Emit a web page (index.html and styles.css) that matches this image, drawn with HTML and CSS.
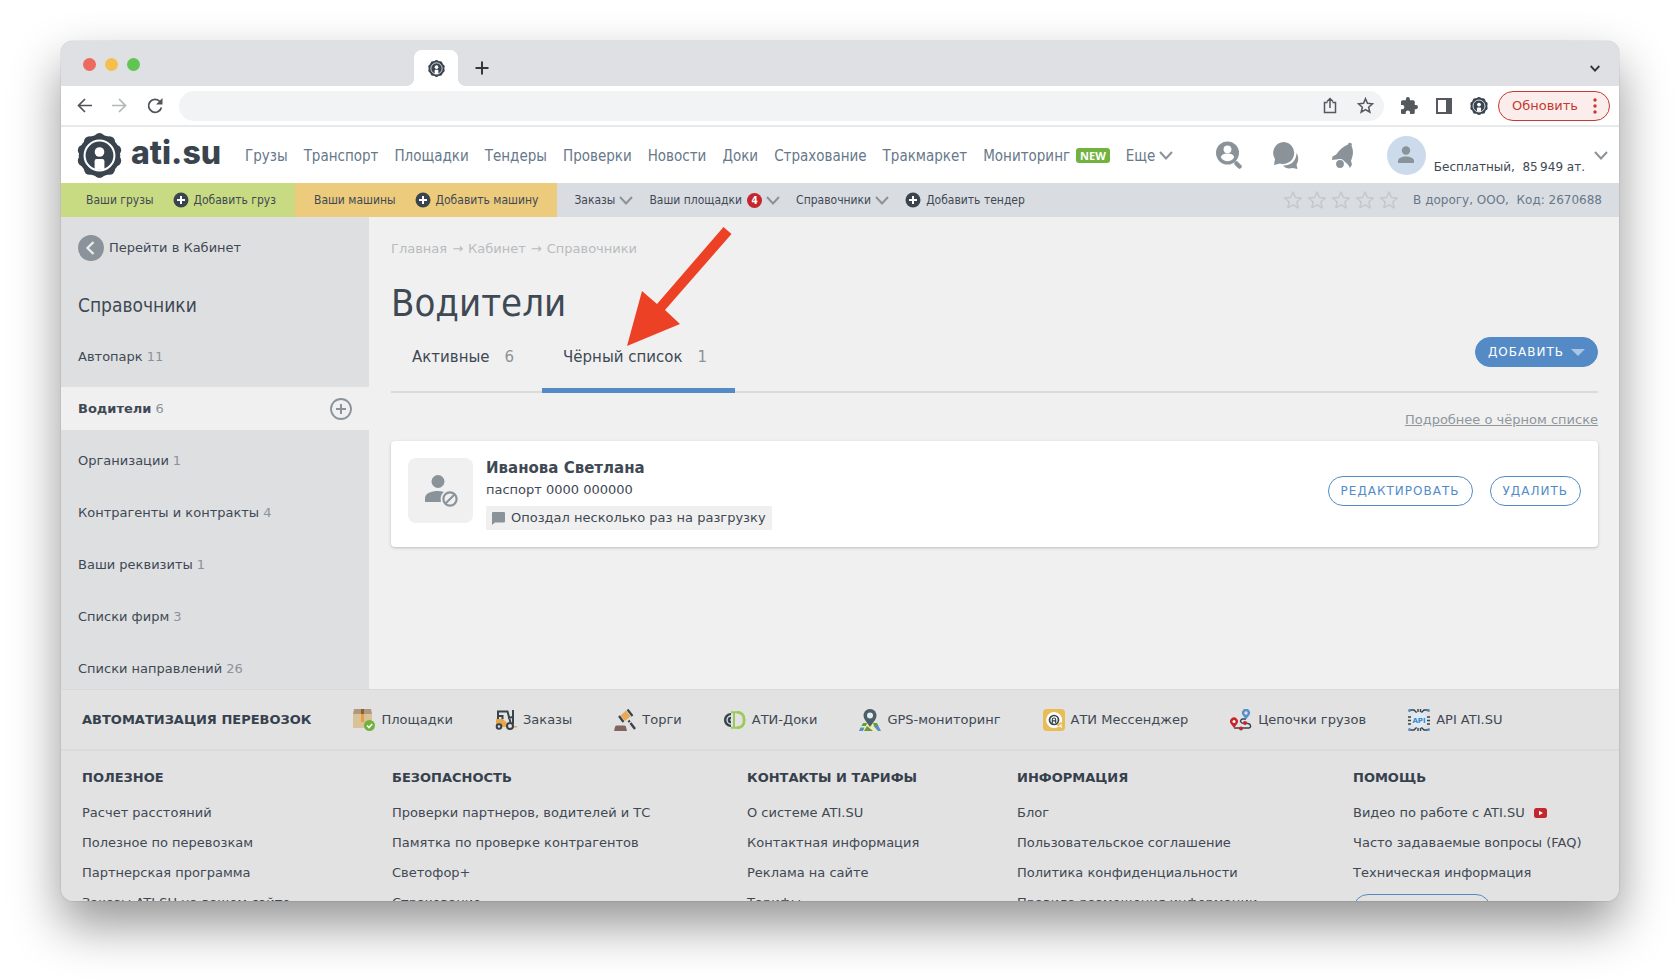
FILE: index.html
```html
<!DOCTYPE html>
<html lang="ru">
<head>
<meta charset="utf-8">
<title>Водители — ATI.SU</title>
<link rel="stylesheet" href="styles.css">
</head>
<body>
<svg class="sprite" aria-hidden="true">
  <symbol id="gear" viewBox="0 0 44 44">
    <g fill="#3a444f"><circle cx="22" cy="22" r="20.300"/>
    <circle cx="22" cy="5.500" r="5.500"/><circle cx="31.700" cy="8.650" r="5.500"/><circle cx="37.700" cy="16.900" r="5.500"/><circle cx="37.700" cy="27.100" r="5.500"/><circle cx="31.700" cy="35.350" r="5.500"/><circle cx="22" cy="38.500" r="5.500"/><circle cx="12.300" cy="35.350" r="5.500"/><circle cx="6.300" cy="27.100" r="5.500"/><circle cx="6.300" cy="16.900" r="5.500"/><circle cx="12.300" cy="8.650" r="5.500"/></g>
    <circle cx="22" cy="22" r="14.600" fill="none" stroke="#fff" stroke-width="2"/>
    <circle cx="22" cy="18.600" r="4.700" fill="#fff"/>
    <path d="M17.200 36V27.500q0-2 2-2h5.600q2 0 2 2V36z" fill="#fff"/>
  </symbol>
  <symbol id="chev" viewBox="0 0 14 9"><path d="M1 1l6 6.500L13 1" fill="none" stroke="currentColor" stroke-width="2"/></symbol>
  <symbol id="plus" viewBox="0 0 16 16"><circle cx="8" cy="8" r="7.500" fill="#3a444f"/><path d="M8 4v8M4 8h8" stroke="#fff" stroke-width="2"/></symbol>
  <symbol id="star" viewBox="0 0 20 20"><path d="M10 2l2.400 5.500 6 .5-4.600 4 1.400 5.900L10 14.800l-5.200 3.100L6.200 12 1.600 8l6-.5z" fill="none" stroke="currentColor" stroke-width="1.500" stroke-linejoin="round"/></symbol>
</svg>
<div class="window">
  <div class="tabstrip">
    <div class="lights"><i class="red"></i><i class="amber"></i><i class="green"></i></div>
    <div class="tab"><svg width="17" height="17"><use href="#gear"/></svg></div>
    <button class="plain newtab" aria-label="Новая вкладка"><svg width="14" height="14" viewBox="0 0 14 14"><path d="M7 .5v13M.5 7h13" stroke="#33363a" stroke-width="2"/></svg></button>
    <button class="plain tabmenu" aria-label="Список вкладок"><svg width="10" height="7" viewBox="0 0 14 9"><path d="M1 1l6 6.500L13 1" fill="none" stroke="#33363a" stroke-width="2.600"/></svg></button>
  </div>
  <div class="toolbar">
    <button class="plain" aria-label="Назад"><svg width="15" height="15" viewBox="0 0 15 15"><path d="M15 7.500H2M8 1L1.500 7.500 8 14" fill="none" stroke="#505357" stroke-width="1.700"/></svg></button>
    <button class="plain" aria-label="Вперёд"><svg width="15" height="15" viewBox="0 0 15 15"><path d="M0 7.500h13M7 1l6.500 6.500L7 14" fill="none" stroke="#b3b6b9" stroke-width="1.700"/></svg></button>
    <button class="plain" aria-label="Обновить страницу"><svg width="16" height="16" viewBox="0 0 16 16"><path d="M13 3.500A6.500 6.500 0 1 0 14.400 9.500" fill="none" stroke="#505357" stroke-width="1.800"/><path d="M15.500 0v6.500H9z" fill="#505357"/></svg></button>
    <div class="omnibox">
      <input type="text" aria-label="Адрес">
      <svg width="14" height="17" viewBox="0 0 14 17"><path d="M4.500 5.500H1.500v10h11v-10h-3M7 11V1.500M4 4.500l3-3 3 3" fill="none" stroke="#55585c" stroke-width="1.500"/></svg>
      <svg width="17" height="17" viewBox="0 0 20 20"><path d="M10 2l2.300 5.500 6 .5-4.600 4 1.400 5.900L10 14.800l-5.100 3.100L6.300 12 1.700 8l6-.5z" fill="none" stroke="#55585c" stroke-width="1.800"/></svg>
    </div>
    <div class="exts">
      <svg width="17" height="17" viewBox="2 1 21 21"><path fill="#55585c" d="M20.500 11H19V7a2 2 0 0 0-2-2h-4V3.500a2.500 2.500 0 0 0-5 0V5H4a2 2 0 0 0-2 2v3.800h1.500a2.700 2.700 0 0 1 0 5.400H2V20c0 1.100.9 2 2 2h3.800v-1.500a2.700 2.700 0 0 1 5.400 0V22H17a2 2 0 0 0 2-2v-4h1.500a2.500 2.500 0 0 0 0-5z"/></svg>
      <svg width="16" height="16" viewBox="0 0 16 16"><path d="M1 1h14v14H1z" fill="none" stroke="#55585c" stroke-width="2"/><path d="M10 1h5v14h-5z" fill="#55585c"/></svg>
      <svg width="18" height="18"><use href="#gear"/></svg>
    </div>
    <button class="update">Обновить<svg width="4" height="16" viewBox="0 0 4 16" fill="#c5392e"><circle cx="2" cy="2" r="1.700"/><circle cx="2" cy="8" r="1.700"/><circle cx="2" cy="14" r="1.700"/></svg></button>
  </div>

  <header class="header">
    <a class="logo" href="#"><svg width="45" height="45"><use href="#gear"/></svg><span>ati.su</span></a>
    <nav class="nav">
      <a href="#">Грузы</a><a href="#">Транспорт</a><a href="#">Площадки</a><a href="#">Тендеры</a><a href="#">Проверки</a><a href="#">Новости</a><a href="#">Доки</a><a href="#">Страхование</a><a href="#">Тракмаркет</a><a href="#">Мониторинг<b class="new">NEW</b></a><a href="#">Еще<svg class="chev" width="14" height="9"><use href="#chev"/></svg></a>
    </nav>
    <div class="tools">
      <button class="plain" aria-label="Поиск"><svg width="26" height="28" viewBox="0 0 26 28"><circle cx="11.500" cy="12" r="11.500" fill="#8b939a"/><circle cx="11.500" cy="8.300" r="3.900" fill="#fff"/><path d="M5 16.500c0-2.800 3-4 6.500-4s6.500 1.200 6.500 4c-1.500 2.500-3.800 3.800-6.500 3.800S6.500 19 5 16.500z" fill="#fff"/><path d="M20.500 22.500l3 3" stroke="#8b939a" stroke-width="4.500" stroke-linecap="round"/></svg></button>
      <button class="plain" aria-label="Сообщения"><svg width="26" height="27" viewBox="0 0 26 27" fill="#8b939a"><path d="M11 0a11 11 0 1 1-4 21.500L1 23l1-6A11 11 0 0 1 11 0z"/><path d="M23.500 11c2.500 4 2.200 8.500 0 11.500l1 4.500-5-1c-3.500 1-7.500.3-9.500-2.500 8 .5 13.500-5 13.500-12.500z"/></svg></button>
      <button class="plain" aria-label="Уведомления"><svg width="26" height="27" viewBox="0 0 26 27" fill="#8b939a"><path d="M19 .5l3 1.200-.5 2c2.500 5.500 1.500 10-.5 15l1 4-2.200 3.300c-1-3-3.500-5.500-6.300-7C9.500 17.500 5.500 17 2 18l.5-3.500 3.700-2C9.500 8 13 4.500 18 2.500z"/><circle cx="10" cy="22" r="4.500" stroke="#fff" stroke-width="1.200"/></svg></button>
    </div>
    <button class="plain account">
      <span class="avatar"><svg width="18" height="18" viewBox="0 0 18 18" fill="#8b939a"><circle cx="9" cy="4.500" r="4.200"/><path d="M1 17v-2c0-3 4-4.500 8-4.500s8 1.500 8 4.500v2z"/></svg></span>
      <span class="plan">Бесплатный,&nbsp; 85&#8201;949 ат.</span>
      <svg class="chev" width="14" height="9"><use href="#chev"/></svg>
    </button>
  </header>

  <div class="subbar">
    <div class="group green"><a href="#">Ваши грузы</a><a href="#"><svg width="16" height="16"><use href="#plus"/></svg>Добавить груз</a></div>
    <div class="group orange"><a href="#">Ваши машины</a><a href="#"><svg width="16" height="16"><use href="#plus"/></svg>Добавить машину</a></div>
    <div class="group menus">
      <a href="#">Заказы<svg class="chev" width="14" height="9"><use href="#chev"/></svg></a>
      <a href="#">Ваши площадки<b class="count">4</b><svg class="chev" width="14" height="9"><use href="#chev"/></svg></a>
      <a href="#">Справочники<svg class="chev" width="14" height="9"><use href="#chev"/></svg></a>
      <a href="#"><svg width="16" height="16"><use href="#plus"/></svg>Добавить тендер</a>
    </div>
    <div class="firm">
      <span class="stars"><svg width="20" height="20"><use href="#star"/></svg><svg width="20" height="20"><use href="#star"/></svg><svg width="20" height="20"><use href="#star"/></svg><svg width="20" height="20"><use href="#star"/></svg><svg width="20" height="20"><use href="#star"/></svg></span>
      <span>В дорогу, ООО,&nbsp; Код: 2670688</span>
    </div>
  </div>

  <div class="body">
    <aside class="sidebar">
      <a class="back" href="#"><svg width="26" height="26" viewBox="0 0 26 26"><circle cx="13" cy="13" r="13" fill="#8b939a"/><path d="M15.500 7L9.500 13l6 6" fill="none" stroke="#e8eaeb" stroke-width="2.400"/></svg>Перейти в Кабинет</a>
      <h2>Справочники</h2>
      <nav class="side">
        <a href="#">Автопарк <span>11</span></a>
        <a href="#" class="active"><b>Водители</b> <span>6</span><svg width="22" height="22" viewBox="0 0 22 22"><circle cx="11" cy="11" r="10" fill="none" stroke="#8b939a" stroke-width="1.800"/><path d="M11 6v10M6 11h10" stroke="#8b939a" stroke-width="2"/></svg></a>
        <a href="#">Организации <span>1</span></a>
        <a href="#">Контрагенты и контракты <span>4</span></a>
        <a href="#">Ваши реквизиты <span>1</span></a>
        <a href="#">Списки фирм <span>3</span></a>
        <a href="#">Списки направлений <span>26</span></a>
      </nav>
    </aside>
    <main class="main">
      <nav class="crumbs"><a href="#">Главная</a><span>→</span><a href="#">Кабинет</a><span>→</span><a href="#">Справочники</a></nav>
      <h1>Водители</h1>
      <div class="tabs">
        <button class="plain tabbtn">Активные<span>6</span></button>
        <button class="plain tabbtn current">Чёрный список<span>1</span></button>
        <button class="pill add">Добавить<svg width="14" height="7" viewBox="0 0 14 7"><path d="M0 0h14L7 7z" fill="#a9c5e6"/></svg></button>
      </div>
      <a class="more" href="#">Подробнее о чёрном списке</a>
      <section class="card">
        <div class="photo"><svg width="34" height="32" viewBox="0 0 34 32"><g fill="#8b939a"><circle cx="14" cy="6.500" r="6.500"/><path d="M1 27v-4c0-4.500 6.500-7 13-7 2 0 4 .3 6 1-3 2-4 6-3 10z"/></g><circle cx="26" cy="24" r="6.600" fill="none" stroke="#8b939a" stroke-width="2.200"/><path d="M21.500 28.500l9-9" stroke="#8b939a" stroke-width="2.200"/></svg></div>
        <div class="info">
          <h3>Иванова Светлана</h3>
          <p>паспорт 0000 000000</p>
          <p class="note"><svg width="13" height="13" viewBox="0 0 13 13"><path d="M1 0h11q1 0 1 1v8.500q0 1-1 1H3L0 13V1q0-1 1-1z" fill="#8b939a"/></svg>Опоздал несколько раз на разгрузку</p>
        </div>
        <div class="actions">
          <button class="pill outline">Редактировать</button>
          <button class="pill outline">Удалить</button>
        </div>
      </section>
      <svg class="arrow" width="106" height="120" viewBox="0 0 106 120"><path d="M0 119L15 64l15 13L96.500 0l8 7L38 83l15 14z" fill="#ed4126"/></svg>
    </main>
  </div>

  <footer class="footer">
    <div class="services">
      <h4>Автоматизация перевозок</h4>
      <a href="#"><svg width="22" height="22" viewBox="0 0 22 22"><path d="M0 5h19v14H0z" fill="#d9c19a"/><path d="M1 0h17l1 5H0z" fill="#b2977f"/><path d="M8 0h3v5H8z" fill="#8c6230"/><path d="M8 5h3v8H8z" fill="#e3a33c"/><circle cx="16.500" cy="16.500" r="5.500" fill="#6fb23c"/><path d="M14 16.500l2 2 3.200-3.500" fill="none" stroke="#fff" stroke-width="1.600"/></svg>Площадки</a>
      <a href="#"><svg width="22" height="20" viewBox="0 0 22 20"><path d="M1 9h7l4 4v4H1z" fill="#e8a849"/><path d="M16 16h6v1.500h-6z" fill="#e8a849"/><path d="M3 9V1.500h9.500l3 11M7.500 9V6H3M13 8l5-1M18 0v14" fill="none" stroke="#39434c" stroke-width="2"/><g fill="#e2e2e2" stroke="#39434c" stroke-width="2"><circle cx="4" cy="16.500" r="2.300"/><circle cx="15" cy="16" r="3"/></g></svg>Заказы</a>
      <a href="#"><svg width="22" height="22" viewBox="0 0 22 22"><path d="M1 18q0-1.500 1.500-1.500h8q1.500 0 1.500 1.500l1 4H0z" fill="#84655c"/><path d="M6.500 6.500L12 1.500l4.500 6-5.500 4.500z" fill="#e8ab54"/><path d="M5 7l4.500 6M13.500.5l5 6.500" stroke="#39434c" stroke-width="2.200"/><path d="M14.500 11.500l1.200 1.600M16.500 14l4.500 6" stroke="#39434c" stroke-width="2.400"/></svg>Торги</a>
      <a href="#"><svg width="22" height="18" viewBox="0 0 22 18"><path d="M7 2C3 2 0 5 0 9s3 7 7 7z" fill="#39434c"/><path d="M7 5a4 4 0 0 0 0 8M7 8v2" fill="none" stroke="#e2e2e2" stroke-width="1.300"/><path d="M7 1.200h5.500c5.500 0 8 3.200 8 7.800s-2.500 7.800-8 7.800H7M10 1v16" fill="none" stroke="#9aca5c" stroke-width="2"/><path d="M13 1.200c5 0 7 3.200 7 7.800s-2 7.800-7 7.800" fill="none" stroke="#9aca5c" stroke-width="2.400"/></svg>АТИ-Доки</a>
      <a href="#"><svg width="22" height="22" viewBox="0 0 22 22"><path d="M4 14h14l4 8H0z" fill="#f3e9b7"/><path d="M4 14h4l-1 3H2.500zM14 14h4l1.500 3H15zM8 17l6 5H5z" fill="#649c3d"/><path d="M1.500 18.500h4L4 22H0zM14.500 17h5l2.500 5h-3z" fill="#558fcd"/><path d="M11 18L6 11C2.500 6 5.500 0 11 0s8.500 6 5 11z" fill="#4b5f69"/><circle cx="11" cy="6.500" r="3" fill="#e9ebed"/></svg>GPS-мониторинг</a>
      <a href="#"><svg width="22" height="22" viewBox="0 0 22 22"><rect width="22" height="22" rx="4" fill="#e9bd55"/><path d="M11 3a8 8 0 1 1-2 15.700A8 8 0 0 1 11 3zM13 16l6 3-1-6z" fill="#fff"/><circle cx="11" cy="11" r="4.500" fill="none" stroke="#39434c" stroke-width="1.700"/><path d="M9.300 14v-3.300a1.700 1.700 0 0 1 3.400 0V14M9.500 11.800h3" fill="none" stroke="#39434c" stroke-width="1.200"/></svg>АТИ Мессенджер</a>
      <a href="#"><svg width="22" height="22" viewBox="0 0 22 22"><path d="M4 19h15q2.500-.5 1-3.500-1-1.500-8-1.500-3-2 0-4h4" fill="none" stroke="#39434c" stroke-width="1.500"/><path d="M4 19L.8 14.800a4 4 0 1 1 6.400 0z" fill="#c9252b"/><circle cx="4" cy="12.500" r="1.500" fill="#fff"/><path d="M16 10.500l-3.200-4.300a4 4 0 1 1 6.400 0z" fill="#558fcd"/><circle cx="16" cy="4" r="1.700" fill="#e2e2e2"/><circle cx="15" cy="14" r="2" fill="#c9252b"/><circle cx="11" cy="19.500" r="2" fill="#c9252b"/></svg>Цепочки грузов</a>
      <a href="#"><svg width="22" height="22" viewBox="0 0 22 22"><path d="M1 1h5l3 3M21 1h-5l-3 3M1 21h5l3-3M21 21h-5l-3-3M0 8h3M0 11.500h3M0 15h3M19 8h3M19 11.500h3M19 15h3M10 0v3M12.500 0v3M10 19v3M12.500 19v3" fill="none" stroke="#39434c" stroke-width="1.400"/><g fill="#558fcd"><circle cx="1.500" cy="1.500" r="1.500"/><circle cx="20.500" cy="1.500" r="1.500"/><circle cx="1.500" cy="20.500" r="1.500"/><circle cx="20.500" cy="20.500" r="1.500"/></g><circle cx="11" cy="11" r="7.800" fill="#dcebf8"/><text class="apitext" x="11" y="13.500" text-anchor="middle">API</text></svg>API ATI.SU</a>
    </div>
    <div class="columns">
      <div><h4>Полезное</h4><a href="#">Расчет расстояний</a><a href="#">Полезное по перевозкам</a><a href="#">Партнерская программа</a><a href="#">Заказы ATI.SU на вашем сайте</a></div>
      <div><h4>Безопасность</h4><a href="#">Проверки партнеров, водителей и ТС</a><a href="#">Памятка по проверке контрагентов</a><a href="#">Светофор+</a><a href="#">Страхование</a></div>
      <div><h4>Контакты и тарифы</h4><a href="#">О системе ATI.SU</a><a href="#">Контактная информация</a><a href="#">Реклама на сайте</a><a href="#">Тарифы</a></div>
      <div><h4>Информация</h4><a href="#">Блог</a><a href="#">Пользовательское соглашение</a><a href="#">Политика конфиденциальности</a><a href="#">Правила размещения информации</a></div>
      <div><h4>Помощь</h4><a href="#">Видео по работе с ATI.SU<svg width="13" height="10" viewBox="0 0 13 10"><rect width="13" height="10" rx="2.500" fill="#c4262c"/><path d="M5 2.800v4.400L9 5z" fill="#fff"/></svg></a><a href="#">Часто задаваемые вопросы (FAQ)</a><a href="#">Техническая информация</a><button class="pill outline help" aria-label="Служба поддержки"></button></div>
    </div>
  </footer>
</div>
</body>
</html>
```
FILE: styles.css
```css
* { box-sizing: border-box; }
body {
  margin: 0;
  height: 100vh;
  padding: 41px 61px 79px;
  overflow: hidden;
  background: #fff;
  color: #3f4954;
  font: 13px/18px "DejaVu Sans", sans-serif;
}
a { color: inherit; text-decoration: none; }
h1, h2, h3, h4, p { margin: 0; }
svg { flex: none; }
button { font-family: inherit; cursor: pointer; }
.sprite { position: absolute; width: 0; height: 0; }
.plain { display: flex; align-items: center; padding: 0; border: 0; background: none; color: inherit; }
.chev { color: #8b939a; }

.window {
  display: flex;
  flex-direction: column;
  height: 100%;
  overflow: hidden;
  border-radius: 12px;
  background: #f0f0f0;
  box-shadow: 0 0 1px rgba(0, 0, 0, .5), 0 24px 50px rgba(0, 0, 0, .42);
}
.window > * { flex: none; }

/* browser frame */
.tabstrip { display: flex; height: 45px; background: #dee0e4; }
.lights { display: flex; gap: 9px; width: 353px; padding: 17px 22px; }
.lights i { width: 13px; height: 13px; border-radius: 50%; }
.red { background: #ed6a5e; }
.amber { background: #f5bf4f; }
.lights .green { background: #61c554; }
.tab {
  position: relative;
  display: flex;
  align-items: center;
  justify-content: center;
  width: 44px;
  margin-top: 9px;
  border-radius: 8px 8px 0 0;
  background: #fff;
}
.tab::before, .tab::after {
  content: "";
  position: absolute;
  bottom: 0;
  width: 8px;
  height: 8px;
}
.tab::before { right: 100%; background: radial-gradient(circle at 0 0, transparent 8px, #fff 8px); }
.tab::after { left: 100%; background: radial-gradient(circle at 100% 0, transparent 8px, #fff 8px); }
.newtab { margin: 9px 0 0 17px; }
.tabmenu { margin: 9px 19px 0 auto; }
.toolbar {
  display: flex;
  align-items: center;
  gap: 20px;
  height: 41px;
  padding: 0 9px 0 16px;
  border-bottom: 2px solid #e8e9eb;
  background: #fff;
}
.omnibox {
  display: flex;
  flex: 1;
  align-items: center;
  gap: 20px;
  height: 30px;
  margin-left: -4px;
  padding: 0 10px 0 16px;
  border-radius: 15px;
  background: #f1f3f4;
}
.omnibox input { flex: 1; min-width: 0; border: 0; outline: 0; background: none; }
.exts { display: flex; align-items: center; gap: 18px; margin-left: -3px; }
.update {
  display: flex;
  align-items: center;
  gap: 15px;
  height: 30px;
  margin-left: -10px;
  padding: 0 12px 0 13px;
  border: 1px solid #c5392e;
  border-radius: 15px;
  background: #fbedec;
  color: #c5392e;
  font-size: 13px;
}

/* site header */
.header {
  display: flex;
  align-items: center;
  height: 56px;
  padding: 0 11px 0 16px;
  background: #fff;
}
.logo { display: flex; align-items: center; gap: 9px; width: 168px; color: #3a444f; }
.logo span { font: 800 32px/40px Inter, sans-serif; padding-bottom: 4px; }
.nav { display: flex; gap: 16px; padding-top: 1px; color: #66788a; font: 15px/18px "DejaVu Sans Condensed", "DejaVu Sans", sans-serif; white-space: nowrap; }
.nav a { display: flex; align-items: center; }
.nav .chev { margin-left: 4px; }
.new {
  margin-left: 6px;
  padding: 0 4px;
  border-radius: 3px;
  background: #72b340;
  color: #fff;
  font: bold 11px/15px "Open Sans", sans-serif;
}
.tools { display: flex; gap: 31px; margin-left: auto; }
.account { gap: 8px; margin-left: 31px; font-size: 12px; white-space: nowrap; }
.account .chev { margin-left: 1px; }
.avatar {
  display: flex;
  align-items: center;
  justify-content: center;
  width: 39px;
  height: 39px;
  border-radius: 50%;
  background: #ccdbec;
}
.plan { padding-top: 23px; }

.subbar { display: flex; align-items: stretch; height: 34px; background: #d9dde2; font-size: 12px; white-space: nowrap; }
.group { display: flex; align-items: center; gap: 19px; padding: 0 19px; font-family: "DejaVu Sans Condensed", "DejaVu Sans", sans-serif; }
.group a { display: flex; align-items: center; gap: 5px; }
.group.green { padding-left: 25px; background: #c8db83; }
.group.orange { background: #edcb7c; }
.group.menus { gap: 16px; padding: 0 17px; }
.menus .chev { margin-left: -1px; }
.count {
  width: 15px;
  height: 15px;
  border-radius: 50%;
  background: #c4262c;
  color: #fff;
  font-size: 10px;
  line-height: 15px;
  text-align: center;
}
.firm { display: flex; align-items: center; gap: 14px; margin-left: auto; padding-right: 17px; color: #66788a; }
.stars { display: flex; gap: 4px; color: #c4c8cc; }

/* page body */
.body { display: flex; height: 472px; }
.sidebar { width: 308px; background: #dddfe1; }
.back { display: flex; align-items: center; gap: 5px; padding: 18px 17px 0; }
.sidebar h2 { padding: 31px 17px 0; font: 19px/26px "DejaVu Sans Condensed", "DejaVu Sans", sans-serif; }
.side { display: flex; flex-direction: column; gap: 9px; padding-top: 17px; }
.side a { display: flex; align-items: center; gap: 4px; height: 43px; padding: 0 17px; }
.side span { color: #8b939a; }
.side svg { margin-left: auto; }
.side .active { background: #f0f0f0; }
.main { position: relative; flex: 1; padding: 22px 21px 0 22px; }
.crumbs { display: flex; gap: 5px; color: #b8bcbf; line-height: 20px; }
h1 { margin-top: 20px; font: 38px/48px "DejaVu Sans Condensed", "DejaVu Sans", sans-serif; }
.tabs { display: flex; align-items: flex-start; height: 66px; border-bottom: 2px solid #d8dadc; }
.tabbtn { gap: 15px; align-items: flex-start; height: 66px; padding: 20px 28px 0 21px; font-size: 15px; line-height: 20px; }
.tabbtn span { color: #8b939a; }
.current { border-bottom: 5px solid #548bc7; }
.pill {
  display: flex;
  align-items: center;
  height: 30px;
  padding: 0 12px;
  border: 1px solid #548bc7;
  border-radius: 15px;
  font-size: 12px;
  letter-spacing: 1px;
  text-transform: uppercase;
}
.add { gap: 7px; margin: 10px 0 0 auto; background: #548bc7; color: #fff; }
.more { display: block; margin-top: 17px; color: #8f969c; line-height: 20px; text-align: right; text-decoration: underline; }
.card {
  display: flex;
  align-items: flex-start;
  gap: 13px;
  margin-top: 11px;
  padding: 15px 17px 16px;
  border-radius: 4px;
  background: #fff;
  box-shadow: 0 1px 3px rgba(0, 0, 0, .22);
}
.photo {
  display: flex;
  align-items: center;
  justify-content: center;
  width: 65px;
  height: 65px;
  margin-top: 2px;
  border-radius: 8px;
  background: #f0f0f0;
}
.info { flex: 1; }
.info h3 { font-size: 15px; line-height: 24px; }
.info p { line-height: 20px; }
.info .note { display: flex; align-items: center; gap: 6px; width: max-content; margin: 6px 0 1px; padding: 2px 6px; background: #f0f0f0; }
.actions { display: flex; gap: 17px; padding-top: 20px; }
.outline { background: none; color: #548bc7; }
.arrow { position: absolute; left: 258px; top: 10px; }

/* footer */
.footer { border-top: 1px solid #d6d8da; background: #e2e2e2; }
.footer h4 { color: #36414d; font-size: 13px; line-height: 18px; text-transform: uppercase; white-space: nowrap; }
.services { display: flex; align-items: center; gap: 42px; height: 61px; padding: 1px 21px 0; border-bottom: 2px solid #dadbdc; white-space: nowrap; }
.services a { display: flex; align-items: center; gap: 6px; }
.apitext { fill: #3f84c8; font: bold 7px "DejaVu Sans", sans-serif; }
.columns { display: grid; grid-template-columns: 310fr 355fr 270fr 336fr 266fr; padding: 18px 0 0 21px; white-space: nowrap; }
.columns a { display: flex; align-items: center; gap: 9px; margin-bottom: 12px; }
.columns h4 { margin-bottom: 17px; }
.help { width: 138px; }
```
